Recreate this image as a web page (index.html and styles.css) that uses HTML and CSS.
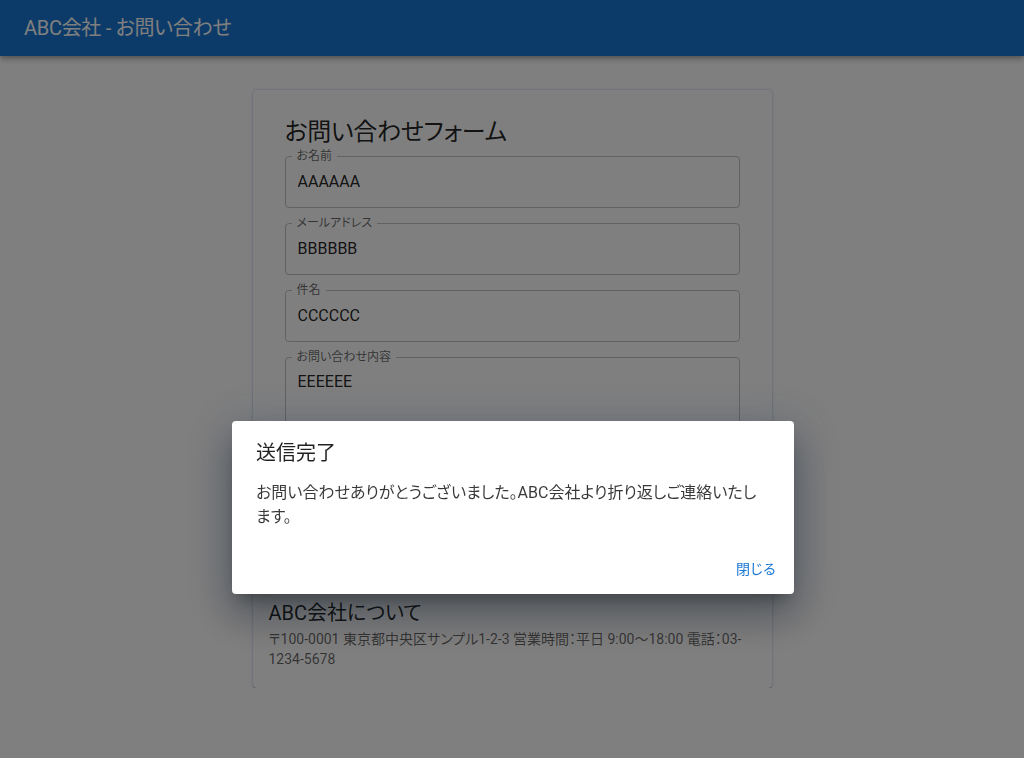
FILE: index.html
```html
<!DOCTYPE html>
<html lang="ja">
  <head>
    <meta charset="UTF-8" />
    <meta name="viewport" content="width=device-width, initial-scale=1.0" />
    <title>ABC会社 - お問い合わせ</title>
    <link rel="stylesheet" href="styles.css">
  </head>
  <body>
    <header class="app-bar">
      <div class="toolbar">
        <h1 class="app-title">ABC会社 - お問い合わせ</h1>
      </div>
    </header>

    <main class="container">
      <div class="card">
        <form class="contact-form">
          <h2 class="form-title">お問い合わせフォーム</h2>

          <fieldset class="field">
            <legend>お名前</legend>
            <input class="field-input" type="text" value="AAAAAA" />
          </fieldset>
          <fieldset class="field">
            <legend>メールアドレス</legend>
            <input class="field-input" type="text" value="BBBBBB" />
          </fieldset>
          <fieldset class="field">
            <legend>件名</legend>
            <input class="field-input" type="text" value="CCCCCC" />
          </fieldset>
          <fieldset class="field">
            <legend>お問い合わせ内容</legend>
            <textarea class="field-input field-textarea" rows="4">EEEEEE</textarea>
          </fieldset>

          <button type="button" class="submit-button">送信</button>
        </form>

        <section class="about">
          <h3 class="about-title">ABC会社について</h3>
          <p class="about-text">〒100-0001 東京都中央区サンプル1-2-3 営業時間：平日 9:00〜18:00 電話：03-<wbr>1234-5678</p>
        </section>
      </div>
    </main>

    <!-- 送信後のダイアログ -->
    <div class="backdrop">
      <div class="dialog" role="dialog">
        <h2 class="dialog-title">送信完了</h2>
        <p class="dialog-text">お問い合わせありがとうございました。ABC会社より折り返しご連絡いたします。</p>
        <div class="dialog-actions">
          <button type="button" class="text-button">閉じる</button>
        </div>
      </div>
    </div>
  </body>
</html>
```
FILE: styles.css
```css
* {
  box-sizing: border-box;
}

body {
  margin: 0;
  font-family: Roboto, "Noto Sans CJK JP", sans-serif;
  font-feature-settings: "palt";
  color: rgba(0, 0, 0, 0.87);
  background-color: #fff;
}

.app-bar {
  background-color: #1976d2;
  color: #fff;
  box-shadow: 0 2px 4px -1px rgba(0, 0, 0, 0.2), 0 4px 5px 0 rgba(0, 0, 0, 0.14),
    0 1px 10px 0 rgba(0, 0, 0, 0.12);
}

.toolbar {
  height: 56px;
  display: flex;
  align-items: center;
  padding: 0 24px;
}

.app-title {
  margin: 0;
  font-size: 20px;
  font-weight: 400;
  line-height: 32px;
  letter-spacing: -0.3px;
}

.container {
  width: 519px;
  margin: 34px auto 0;
}

.card {
  background-color: #fff;
  border-radius: 4px;
  box-shadow: 0 2px 1px -1px rgba(0, 0, 0, 0.25), 0 1px 1px 0 rgba(0, 0, 0, 0.16),
    0 0 3px 0 rgba(0, 70, 150, 0.3);
}

.contact-form {
  display: flex;
  flex-direction: column;
  padding: 26px 32px 50px;
}

.form-title {
  margin: 0;
  font-size: 24px;
  font-weight: 400;
  line-height: 32px;
  letter-spacing: -0.3px;
}

.field {
  margin: 0;
  padding: 0 12px 0 6px;
  border: 1px solid rgba(0, 0, 0, 0.23);
  border-radius: 4px;
  min-width: 0;
}

.field + .field {
  margin-top: 7px;
}

.field legend {
  padding: 0 5px;
  font-size: 12px;
  line-height: 16px;
  color: rgba(0, 0, 0, 0.6);
}

.field-input {
  display: block;
  width: 100%;
  border: none;
  outline: none;
  background: transparent;
  font: inherit;
  font-size: 16px;
  line-height: 24px;
  height: 43px;
  padding: 5px 0 14px 6px;
  color: rgba(0, 0, 0, 0.87);
}

.field-textarea {
  height: 115px;
  resize: none;
  overflow: hidden;
}

.submit-button {
  margin-top: 16px;
  height: 36px;
  border: none;
  border-radius: 4px;
  background-color: #1976d2;
  color: #fff;
  font: inherit;
  font-size: 14px;
  font-weight: 500;
}

.about {
  padding: 14px 16px 19px;
}

.about-title {
  margin: 0;
  font-size: 20px;
  font-weight: 400;
  line-height: 32px;
}

.about-text {
  margin: 0;
  font-size: 14px;
  line-height: 20px;
  color: rgba(0, 0, 0, 0.6);
}

.backdrop {
  position: fixed;
  inset: 0;
  background-color: rgba(0, 0, 0, 0.5);
  display: flex;
  justify-content: center;
  align-items: flex-start;
  padding-top: 421px;
}

.dialog {
  width: 562px;
  margin-left: 2px;
  background-color: #fff;
  border-radius: 4px;
  box-shadow: 0 11px 15px -7px rgba(0, 0, 0, 0.3), 0 24px 38px 3px rgba(0, 0, 0, 0.2),
    0 9px 46px 8px rgba(20, 50, 90, 0.2);
}

.dialog-title {
  margin: 0;
  padding: 16px 24px 12px;
  font-size: 20px;
  font-weight: 400;
  line-height: 32px;
}

.dialog-text {
  margin: 0;
  padding: 0 24px 13px;
  font-size: 16px;
  line-height: 24px;
  color: rgba(0, 0, 0, 0.78);
}

.dialog-actions {
  display: flex;
  justify-content: flex-end;
  padding: 8px 6px 8px 8px;
}

.text-button {
  min-width: 64px;
  height: 36px;
  padding: 6px 8px;
  border: none;
  border-radius: 4px;
  background: none;
  color: #1976d2;
  font: inherit;
  font-size: 14px;
  letter-spacing: 0.4px;
  cursor: pointer;
}
```
